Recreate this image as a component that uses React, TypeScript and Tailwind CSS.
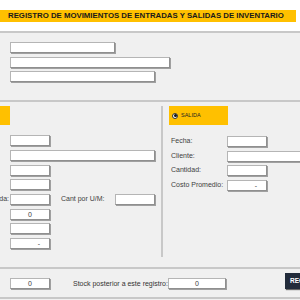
import React from "react";

function Field({ w, value, align = "center" }: { w: string; value?: string; align?: "center" | "right" }) {
  return (
    <div
      className={`${w} h-[11px] shrink-0 bg-white border border-[#b5b5b5] border-r-[#8f8f8f] border-b-[#8f8f8f] shadow-[1px_1px_0_#a0a0a0] flex items-center text-[7px] leading-none text-[#404040] ${
        align === "right" ? "justify-end pr-[9px]" : "justify-center"
      }`}
    >
      {value}
    </div>
  );
}

function Line() {
  return <div className="h-[2px] w-full bg-[#c8c8c8] shrink-0" />;
}

export default function App() {
  return (
    <div className="w-[300px] h-[300px] overflow-hidden bg-[#f0f0f0] font-['Liberation_Sans',Arial,sans-serif] text-[#404040] flex flex-col">
      {/* header */}
      <div className="h-[31px] bg-white pt-[10px] shrink-0">
        <div className="h-[12px] w-[296px] bg-[#ffc000] pl-[8px] flex items-center">
          <span className="text-[7.8px] font-bold text-[#1a1a1a] whitespace-nowrap leading-none">
            REGISTRO DE MOVIMIENTOS DE ENTRADAS Y SALIDAS DE INVENTARIO
          </span>
        </div>
      </div>
      <Line />

      {/* producto */}
      <div className="h-[67px] pl-[10px] pt-[9px] flex flex-col shrink-0">
        <Field w="w-[105px]" />
        <div className="mt-[4px]">
          <Field w="w-[160px]" />
        </div>
        <div className="mt-[3px]">
          <Field w="w-[145px]" />
        </div>
      </div>
      <Line />

      {/* entrada / salida */}
      <div className="h-[165px] flex shrink-0">
        <div className="w-[161px] shrink-0 pt-[4px] flex flex-col">
          <div className="w-[10px] h-[19px] bg-[#ffc000]" />
          <div className="pl-[10px] mt-[10px] flex flex-col">
            <Field w="w-[40px]" />
            <div className="mt-[4px]">
              <Field w="w-[145px]" />
            </div>
            <div className="mt-[4px]">
              <Field w="w-[40px]" />
            </div>
            <div className="mt-[3px]">
              <Field w="w-[40px]" />
            </div>
            <div className="mt-[4px] flex items-center relative">
              <span className="absolute right-[152px] text-[7px] whitespace-nowrap">Unidad de Medida:</span>
              <Field w="w-[40px]" />
              <span className="ml-[11px] w-[54px] text-[7px] whitespace-nowrap">Cant por U/M:</span>
              <Field w="w-[40px]" />
            </div>
            <div className="mt-[4px]">
              <Field w="w-[40px]" value="0" />
            </div>
            <div className="mt-[3px]">
              <Field w="w-[40px]" />
            </div>
            <div className="mt-[4px]">
              <Field w="w-[40px]" value="-" align="right" />
            </div>
          </div>
        </div>

        <div className="w-[2px] bg-[#c8c8c8] mt-[4px] mb-[10px] shrink-0" />

        <div className="flex-1 pt-[4px] pl-[6px] flex flex-col">
          <div className="w-[59px] h-[19px] bg-[#ffc000] flex items-center pl-[3px] gap-[3px]">
            <div className="w-[6px] h-[6px] rounded-full border border-[#333] bg-white flex items-center justify-center">
              <div className="w-[3px] h-[3px] rounded-full bg-[#111]" />
            </div>
            <span className="text-[5.5px] text-[#222] leading-none">SALIDA</span>
          </div>
          <div className="mt-[11px] flex flex-col pl-[2px]">
            <div className="flex items-center">
              <span className="w-[56px] text-[7px]">Fecha:</span>
              <Field w="w-[40px]" />
            </div>
            <div className="flex items-center mt-[4px]">
              <span className="w-[56px] text-[7px]">Cliente:</span>
              <Field w="w-[80px]" />
            </div>
            <div className="flex items-center mt-[3px]">
              <span className="w-[56px] text-[7px]">Cantidad:</span>
              <Field w="w-[40px]" />
            </div>
            <div className="flex items-center mt-[4px]">
              <span className="w-[56px] text-[7px] whitespace-nowrap">Costo Promedio:</span>
              <Field w="w-[40px]" value="-" align="right" />
            </div>
          </div>
        </div>
      </div>
      <Line />

      {/* stock */}
      <div className="h-[28px] flex items-start pl-[10px] shrink-0">
        <div className="mt-[9px]">
          <Field w="w-[40px]" value="0" />
        </div>
        <span className="mt-[10px] ml-[23px] w-[96px] text-[7px] text-[#333] whitespace-nowrap">
          Stock posterior a este registro:
        </span>
        <div className="mt-[9px]">
          <Field w="w-[58px]" value="0" />
        </div>
        <button className="mt-[4px] ml-[59px] h-[16px] w-[40px] shrink-0 bg-[#222b3a] text-white text-[6.5px] font-bold pl-[5px] text-left shadow-[1px_1px_1px_#666]">
          REGISTRAR
        </button>
      </div>
      <Line />
    </div>
  );
}
